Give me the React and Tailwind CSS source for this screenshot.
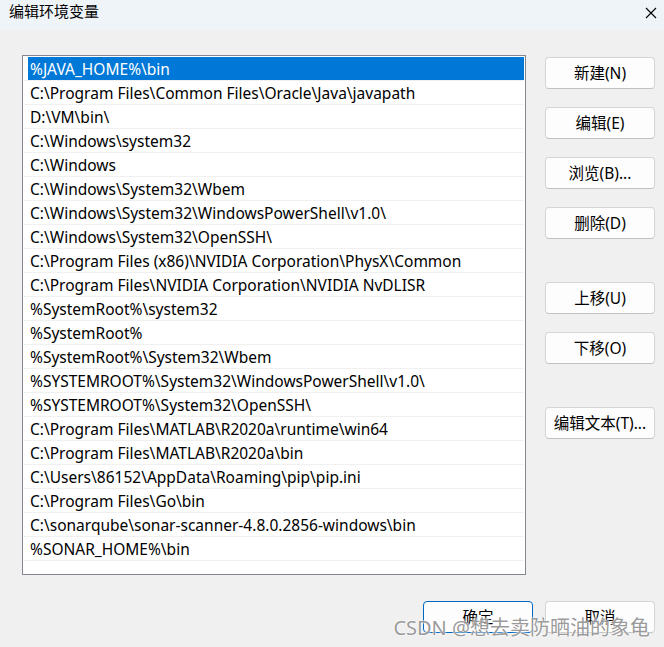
import React from "react";

const PATHS = [
  "%JAVA_HOME%\\bin",
  "C:\\Program Files\\Common Files\\Oracle\\Java\\javapath",
  "D:\\VM\\bin\\",
  "C:\\Windows\\system32",
  "C:\\Windows",
  "C:\\Windows\\System32\\Wbem",
  "C:\\Windows\\System32\\WindowsPowerShell\\v1.0\\",
  "C:\\Windows\\System32\\OpenSSH\\",
  "C:\\Program Files (x86)\\NVIDIA Corporation\\PhysX\\Common",
  "C:\\Program Files\\NVIDIA Corporation\\NVIDIA NvDLISR",
  "%SystemRoot%\\system32",
  "%SystemRoot%",
  "%SystemRoot%\\System32\\Wbem",
  "%SYSTEMROOT%\\System32\\WindowsPowerShell\\v1.0\\",
  "%SYSTEMROOT%\\System32\\OpenSSH\\",
  "C:\\Program Files\\MATLAB\\R2020a\\runtime\\win64",
  "C:\\Program Files\\MATLAB\\R2020a\\bin",
  "C:\\Users\\86152\\AppData\\Roaming\\pip\\pip.ini",
  "C:\\Program Files\\Go\\bin",
  "C:\\sonarqube\\sonar-scanner-4.8.0.2856-windows\\bin",
  "%SONAR_HOME%\\bin",
];

function WinButton({ children, primary, className = "" }) {
  return (
    <button
      className={
        "flex h-[32px] w-[110px] items-center justify-center rounded-[4px] border bg-[#fdfdfd] pt-[2px] text-[15.5px] text-black " +
        (primary
          ? "border-[#0067c0] "
          : "border-[#d5d5d5] border-b-[#c2c2c2] ") +
        className
      }
    >
      {children}
    </button>
  );
}

export default function App() {
  return (
    <div
      className="flex h-[647px] w-[664px] flex-col overflow-hidden bg-[#f0f0f0] text-black"
      style={{ fontFamily: '"Noto Sans", "Noto Sans CJK SC", sans-serif' }}
    >
      {/* title bar */}
      <div className="flex h-[30px] shrink-0 items-start justify-between bg-[#eff4f9] pl-[9px] pr-[6px] pt-[1px]">
        <span className="text-[15px] leading-[20px]">编辑环境变量</span>
        <svg width="12" height="12" viewBox="0 0 12 12" className="mr-[1px] mt-[6px]" aria-hidden>
          <path d="M1 1 L11 11 M11 1 L1 11" stroke="#000" strokeWidth="1.1" />
        </svg>
      </div>

      <div className="flex flex-1 pl-[22px] pt-[25px]">
        {/* path list */}
        <div className="h-[520px] w-[504px] border border-[#828790] bg-white px-[1px] pt-[1px]">
          {PATHS.map((p, i) => (
            <div key={p} className="h-[24px] border-b border-[#f0f0f0]">
              <div
                className={
                  "ml-[4px] flex h-[23px] items-center whitespace-nowrap pl-[2px] pt-[2px] text-[15.5px] " +
                  (i === 0 ? "bg-[#0078d7] text-white" : "")
                }
              >
                {p}
              </div>
            </div>
          ))}
        </div>

        {/* side buttons */}
        <div className="ml-[19px] flex flex-col pt-[2px]">
          <div className="flex flex-col gap-[18px]">
            <WinButton>新建(N)</WinButton>
            <WinButton>编辑(E)</WinButton>
            <WinButton>浏览(B)...</WinButton>
            <WinButton>删除(D)</WinButton>
          </div>
          <div className="mt-[43px] flex flex-col gap-[18px]">
            <WinButton>上移(U)</WinButton>
            <WinButton>下移(O)</WinButton>
          </div>
          <WinButton className="mt-[43px]">编辑文本(T)...</WinButton>
        </div>
      </div>

      {/* bottom buttons */}
      <div className="relative flex shrink-0 justify-end gap-[12px] pb-[14px] pr-[9px]">
        <WinButton primary>确定</WinButton>
        <WinButton>取消</WinButton>
        <span
          className="pointer-events-none absolute bottom-[7px] right-[14px] whitespace-nowrap text-[20px] leading-[24px] text-[#808080]/80"
          style={{ textShadow: "0 0 2px #fff, 0 0 2px #fff" }}
        >
          CSDN @想去卖防晒油的象龟
        </span>
      </div>
    </div>
  );
}
